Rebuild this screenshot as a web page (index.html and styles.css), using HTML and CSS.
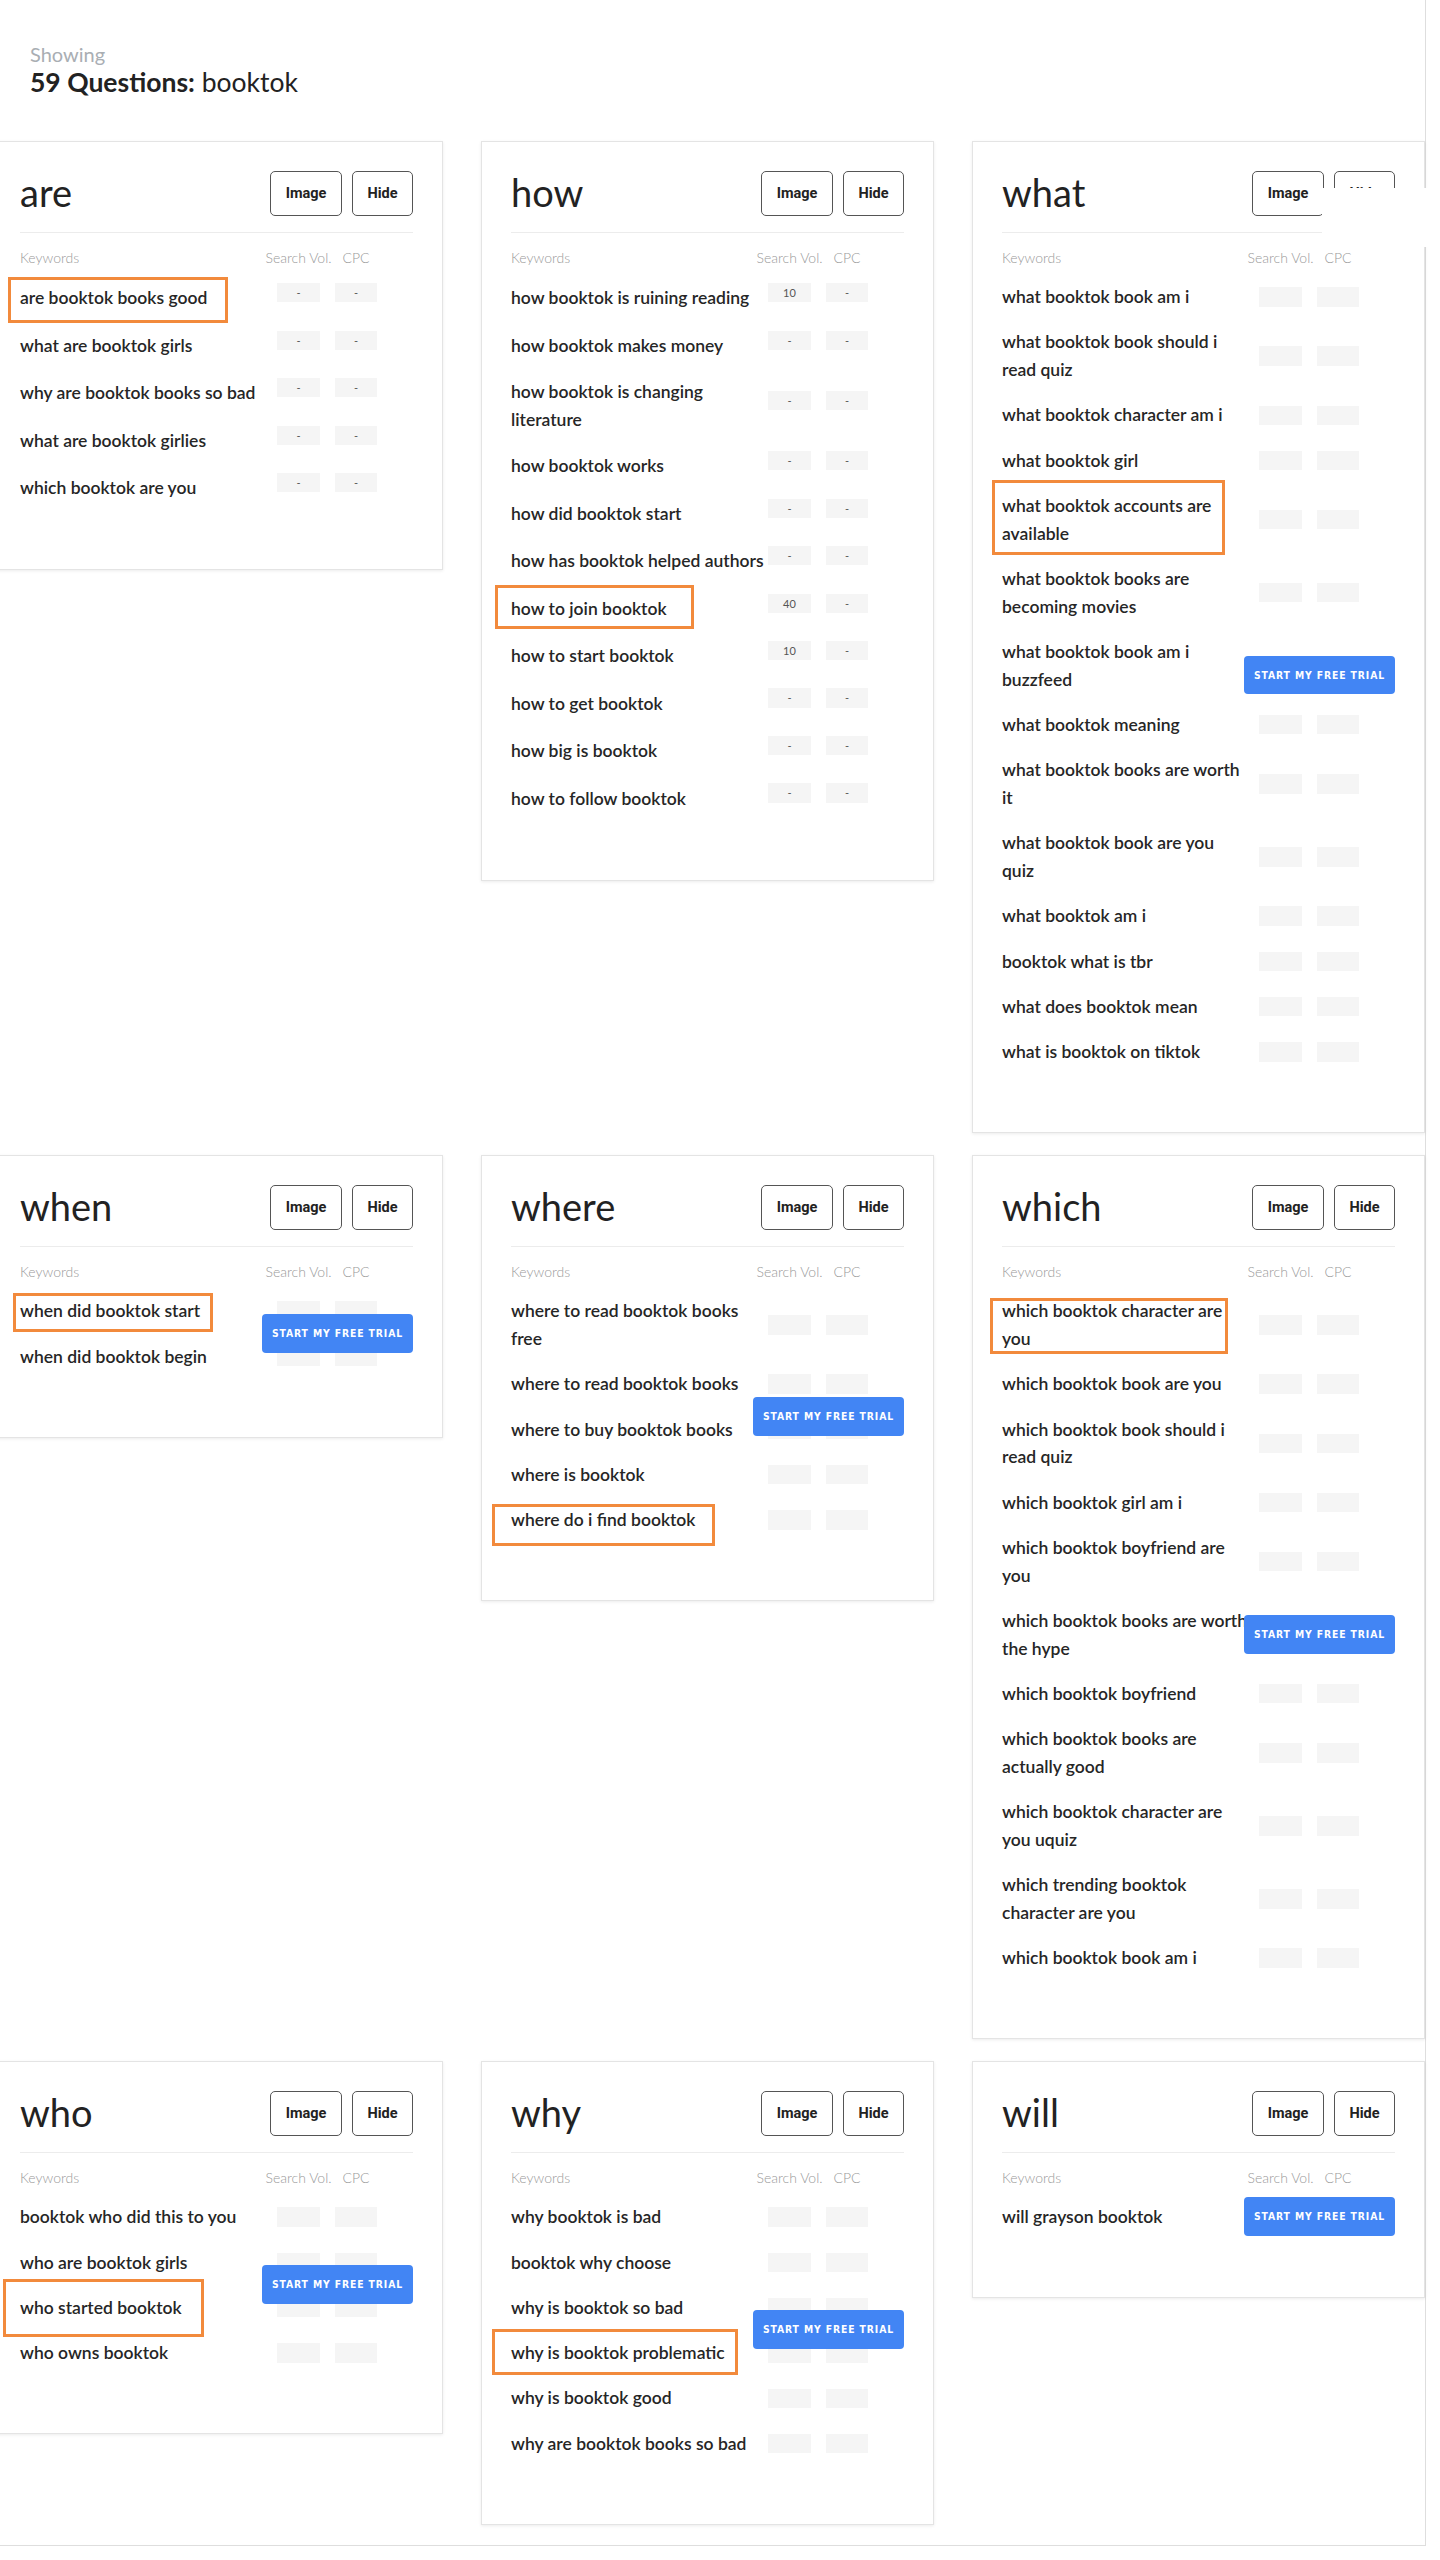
FILE: index.html
```html
<!DOCTYPE html>
<html lang="en">
<head>
<meta charset="utf-8">
<title>59 Questions: booktok</title>
<link rel="stylesheet" href="styles.css">
</head>
<body>
<div class="page">
  <div class="heading">
    <div class="showing">Showing</div>
    <div class="count"><strong>59 Questions:</strong> booktok</div>
  </div>

  <div class="grid">
    <!-- ARE -->
    <section class="card filled">
      <header class="card-head"><h2 class="card-title">are</h2><div class="actions"><button class="btn">Image</button><button class="btn">Hide</button></div></header>
      <div class="cols"><span class="c-kw">Keywords</span><span class="c-val">Search Vol.</span><span class="c-val c-cpc">CPC</span></div>
      <div class="row"><span class="kw">are booktok books good</span><span class="val">-</span><span class="val cpc">-</span><span class="hl hl-are"></span></div>
      <div class="row"><span class="kw">what are booktok girls</span><span class="val">-</span><span class="val cpc">-</span></div>
      <div class="row"><span class="kw">why are booktok books so bad</span><span class="val">-</span><span class="val cpc">-</span></div>
      <div class="row"><span class="kw">what are booktok girlies</span><span class="val">-</span><span class="val cpc">-</span></div>
      <div class="row"><span class="kw">which booktok are you</span><span class="val">-</span><span class="val cpc">-</span></div>
    </section>

    <!-- HOW -->
    <section class="card filled">
      <header class="card-head"><h2 class="card-title">how</h2><div class="actions"><button class="btn">Image</button><button class="btn">Hide</button></div></header>
      <div class="cols"><span class="c-kw">Keywords</span><span class="c-val">Search Vol.</span><span class="c-val c-cpc">CPC</span></div>
      <div class="row"><span class="kw">how booktok is ruining reading</span><span class="val">10</span><span class="val cpc">-</span></div>
      <div class="row"><span class="kw">how booktok makes money</span><span class="val">-</span><span class="val cpc">-</span></div>
      <div class="row"><span class="kw">how booktok is changing<br>literature</span><span class="val">-</span><span class="val cpc">-</span></div>
      <div class="row"><span class="kw">how booktok works</span><span class="val">-</span><span class="val cpc">-</span></div>
      <div class="row"><span class="kw">how did booktok start</span><span class="val">-</span><span class="val cpc">-</span></div>
      <div class="row"><span class="kw">how has booktok helped authors</span><span class="val">-</span><span class="val cpc">-</span></div>
      <div class="row"><span class="kw">how to join booktok</span><span class="val">40</span><span class="val cpc">-</span><span class="hl hl-how"></span></div>
      <div class="row"><span class="kw">how to start booktok</span><span class="val">10</span><span class="val cpc">-</span></div>
      <div class="row"><span class="kw">how to get booktok</span><span class="val">-</span><span class="val cpc">-</span></div>
      <div class="row"><span class="kw">how big is booktok</span><span class="val">-</span><span class="val cpc">-</span></div>
      <div class="row"><span class="kw">how to follow booktok</span><span class="val">-</span><span class="val cpc">-</span></div>
    </section>

    <!-- WHAT -->
    <section class="card">
      <header class="card-head"><h2 class="card-title">what</h2><div class="actions"><button class="btn">Image</button><button class="btn">Hide</button></div></header>
      <div class="cols"><span class="c-kw">Keywords</span><span class="c-val">Search Vol.</span><span class="c-val c-cpc">CPC</span></div>
      <div class="row"><span class="kw">what booktok book am i</span><span class="val"></span><span class="val cpc"></span></div>
      <div class="row"><span class="kw">what booktok book should i<br>read quiz</span><span class="val"></span><span class="val cpc"></span></div>
      <div class="row"><span class="kw">what booktok character am i</span><span class="val"></span><span class="val cpc"></span></div>
      <div class="row"><span class="kw">what booktok girl</span><span class="val"></span><span class="val cpc"></span></div>
      <div class="row"><span class="kw">what booktok accounts are<br>available</span><span class="val"></span><span class="val cpc"></span><span class="hl hl-what"></span></div>
      <div class="row"><span class="kw">what booktok books are<br>becoming movies</span><span class="val"></span><span class="val cpc"></span></div>
      <div class="row"><span class="kw">what booktok book am i<br>buzzfeed</span><span class="val"></span><span class="val cpc"></span></div>
      <div class="row"><span class="kw">what booktok meaning</span><span class="val"></span><span class="val cpc"></span></div>
      <div class="row"><span class="kw">what booktok books are worth<br>it</span><span class="val"></span><span class="val cpc"></span></div>
      <div class="row"><span class="kw">what booktok book are you<br>quiz</span><span class="val"></span><span class="val cpc"></span></div>
      <div class="row"><span class="kw">what booktok am i</span><span class="val"></span><span class="val cpc"></span></div>
      <div class="row"><span class="kw">booktok what is tbr</span><span class="val"></span><span class="val cpc"></span></div>
      <div class="row"><span class="kw">what does booktok mean</span><span class="val"></span><span class="val cpc"></span></div>
      <div class="row"><span class="kw">what is booktok on tiktok</span><span class="val"></span><span class="val cpc"></span></div>
      <button class="trial trial-what">START MY FREE TRIAL</button>
      <div class="mask"></div>
    </section>

    <!-- WHEN -->
    <section class="card">
      <header class="card-head"><h2 class="card-title">when</h2><div class="actions"><button class="btn">Image</button><button class="btn">Hide</button></div></header>
      <div class="cols"><span class="c-kw">Keywords</span><span class="c-val">Search Vol.</span><span class="c-val c-cpc">CPC</span></div>
      <div class="row"><span class="kw">when did booktok start</span><span class="val"></span><span class="val cpc"></span><span class="hl hl-when"></span></div>
      <div class="row"><span class="kw">when did booktok begin</span><span class="val"></span><span class="val cpc"></span></div>
      <button class="trial trial-when">START MY FREE TRIAL</button>
    </section>

    <!-- WHERE -->
    <section class="card">
      <header class="card-head"><h2 class="card-title">where</h2><div class="actions"><button class="btn">Image</button><button class="btn">Hide</button></div></header>
      <div class="cols"><span class="c-kw">Keywords</span><span class="c-val">Search Vol.</span><span class="c-val c-cpc">CPC</span></div>
      <div class="row"><span class="kw">where to read booktok books<br>free</span><span class="val"></span><span class="val cpc"></span></div>
      <div class="row"><span class="kw">where to read booktok books</span><span class="val"></span><span class="val cpc"></span></div>
      <div class="row"><span class="kw">where to buy booktok books</span><span class="val"></span><span class="val cpc"></span></div>
      <div class="row"><span class="kw">where is booktok</span><span class="val"></span><span class="val cpc"></span></div>
      <div class="row"><span class="kw">where do i find booktok</span><span class="val"></span><span class="val cpc"></span><span class="hl hl-where"></span></div>
      <button class="trial trial-where">START MY FREE TRIAL</button>
    </section>

    <!-- WHICH -->
    <section class="card">
      <header class="card-head"><h2 class="card-title">which</h2><div class="actions"><button class="btn">Image</button><button class="btn">Hide</button></div></header>
      <div class="cols"><span class="c-kw">Keywords</span><span class="c-val">Search Vol.</span><span class="c-val c-cpc">CPC</span></div>
      <div class="row"><span class="kw">which booktok character are<br>you</span><span class="val"></span><span class="val cpc"></span><span class="hl hl-which"></span></div>
      <div class="row"><span class="kw">which booktok book are you</span><span class="val"></span><span class="val cpc"></span></div>
      <div class="row"><span class="kw">which booktok book should i<br>read quiz</span><span class="val"></span><span class="val cpc"></span></div>
      <div class="row"><span class="kw">which booktok girl am i</span><span class="val"></span><span class="val cpc"></span></div>
      <div class="row"><span class="kw">which booktok boyfriend are<br>you</span><span class="val"></span><span class="val cpc"></span></div>
      <div class="row"><span class="kw">which booktok books are worth<br>the hype</span><span class="val"></span><span class="val cpc"></span></div>
      <div class="row"><span class="kw">which booktok boyfriend</span><span class="val"></span><span class="val cpc"></span></div>
      <div class="row"><span class="kw">which booktok books are<br>actually good</span><span class="val"></span><span class="val cpc"></span></div>
      <div class="row"><span class="kw">which booktok character are<br>you uquiz</span><span class="val"></span><span class="val cpc"></span></div>
      <div class="row"><span class="kw">which trending booktok<br>character are you</span><span class="val"></span><span class="val cpc"></span></div>
      <div class="row"><span class="kw">which booktok book am i</span><span class="val"></span><span class="val cpc"></span></div>
      <button class="trial trial-which">START MY FREE TRIAL</button>
    </section>

    <!-- WHO -->
    <section class="card">
      <header class="card-head"><h2 class="card-title">who</h2><div class="actions"><button class="btn">Image</button><button class="btn">Hide</button></div></header>
      <div class="cols"><span class="c-kw">Keywords</span><span class="c-val">Search Vol.</span><span class="c-val c-cpc">CPC</span></div>
      <div class="row"><span class="kw">booktok who did this to you</span><span class="val"></span><span class="val cpc"></span></div>
      <div class="row"><span class="kw">who are booktok girls</span><span class="val"></span><span class="val cpc"></span></div>
      <div class="row"><span class="kw">who started booktok</span><span class="val"></span><span class="val cpc"></span><span class="hl hl-who"></span></div>
      <div class="row"><span class="kw">who owns booktok</span><span class="val"></span><span class="val cpc"></span></div>
      <button class="trial trial-who">START MY FREE TRIAL</button>
    </section>

    <!-- WHY -->
    <section class="card">
      <header class="card-head"><h2 class="card-title">why</h2><div class="actions"><button class="btn">Image</button><button class="btn">Hide</button></div></header>
      <div class="cols"><span class="c-kw">Keywords</span><span class="c-val">Search Vol.</span><span class="c-val c-cpc">CPC</span></div>
      <div class="row"><span class="kw">why booktok is bad</span><span class="val"></span><span class="val cpc"></span></div>
      <div class="row"><span class="kw">booktok why choose</span><span class="val"></span><span class="val cpc"></span></div>
      <div class="row"><span class="kw">why is booktok so bad</span><span class="val"></span><span class="val cpc"></span></div>
      <div class="row"><span class="kw">why is booktok problematic</span><span class="val"></span><span class="val cpc"></span><span class="hl hl-why"></span></div>
      <div class="row"><span class="kw">why is booktok good</span><span class="val"></span><span class="val cpc"></span></div>
      <div class="row"><span class="kw">why are booktok books so bad</span><span class="val"></span><span class="val cpc"></span></div>
      <button class="trial trial-why">START MY FREE TRIAL</button>
    </section>

    <!-- WILL -->
    <section class="card">
      <header class="card-head"><h2 class="card-title">will</h2><div class="actions"><button class="btn">Image</button><button class="btn">Hide</button></div></header>
      <div class="cols"><span class="c-kw">Keywords</span><span class="c-val">Search Vol.</span><span class="c-val c-cpc">CPC</span></div>
      <div class="row"><span class="kw">will grayson booktok</span><span class="val"></span><span class="val cpc"></span></div>
      <button class="trial trial-will">START MY FREE TRIAL</button>
    </section>
  </div>
</div>
</body>
</html>
```

FILE: styles.css
```css
* { box-sizing: border-box; }

body {
  margin: 0;
  background: #fff;
  font-family: Lato, "Noto Sans", sans-serif;
  color: #222;
}

.page {
  width: 1436px;
  margin-left: -10px;
  border-right: 1px solid #dedede;
  border-bottom: 1px solid #dedede;
  padding-bottom: 20px;
}

.heading {
  padding: 42px 0 0 40px;
  margin-bottom: 43px;
}

.showing {
  font-size: 20px;
  line-height: 24px;
  color: #a9aeb3;
}

.count {
  font-size: 26.5px;
  line-height: 32px;
  color: #222;
}

.count strong { font-weight: 700; }

.grid {
  display: grid;
  grid-template-columns: repeat(3, 453px);
  column-gap: 38px;
  row-gap: 22px;
  align-items: start;
}

.card {
  position: relative;
  background: #fff;
  border: 1px solid #e4e4e4;
  box-shadow: 0 1px 3px rgba(0, 0, 0, 0.08);
  padding: 29px 29px 57.5px;
}

.card-head {
  display: flex;
  justify-content: space-between;
  align-items: flex-start;
  height: 62px;
  padding-bottom: 16px;
  border-bottom: 1px solid #ececec;
}

.card-title {
  margin: 0;
  font-size: 38px;
  font-weight: 400;
  line-height: 42px;
  color: #222;
}

.actions {
  display: flex;
  gap: 10px;
}

.btn {
  height: 45px;
  padding: 0 14.5px;
  border: 1px solid #555;
  border-radius: 5px;
  background: #fff;
  font-family: Roboto, "Liberation Sans", sans-serif;
  font-weight: 700;
  font-size: 14.5px;
  color: #222;
}

.cols {
  display: flex;
  padding: 15px 0 6.3px;
  font-size: 14px;
  line-height: 20px;
  font-weight: 300;
  color: #999;
}

.c-kw { width: 257px; flex: none; }

.c-val {
  width: 43px;
  flex: none;
  display: flex;
  justify-content: center;
  white-space: nowrap;
}

.c-cpc { width: 42px; margin-left: 15px; }

.row {
  position: relative;
  display: flex;
  align-items: center;
  padding: 8.8px 0;
}

.kw {
  width: 257px;
  flex: none;
  font-size: 17.5px;
  line-height: 27.7px;
  font-weight: 600;
  white-space: nowrap;
  color: #262626;
}

.val {
  width: 43px;
  height: 19.3px;
  flex: none;
  background: #f5f5f5;
  font-size: 11px;
  line-height: 19.3px;
  text-align: center;
  color: #555;
}

.val.cpc { width: 42px; margin-left: 15px; }

.filled .val { margin-bottom: 10.6px; }

/* orange annotation frames */
.hl {
  position: absolute;
  border: 3px solid #f28a3c;
  pointer-events: none;
}
.hl-are   { left: -12px; top: 2.5px;  width: 220px; height: 46px; }
.hl-how   { left: -16px; top: 0;      width: 199px; height: 44px; }
.hl-what  { left: -10px; top: -3px;   width: 233px; height: 75px; }
.hl-when  { left: -7px;  top: 4.7px;  width: 200px; height: 39px; }
.hl-where { left: -19px; top: 6.8px;  width: 223px; height: 42px; }
.hl-which { left: -12px; top: 10px;   width: 238px; height: 56px; }
.hl-who   { left: -17px; top: -6px;   width: 201px; height: 58px; }
.hl-why   { left: -19px; top: -1px;   width: 246px; height: 46px; }

/* upsell overlays */
.trial {
  position: absolute;
  right: 29px;
  width: 151px;
  height: 38.5px;
  border: 0;
  border-radius: 4px;
  background: #4285f4;
  color: #fff;
  font-family: "DejaVu Sans Condensed", "DejaVu Sans", sans-serif;
  font-weight: 700;
  font-size: 10.3px;
  letter-spacing: 0.9px;
  padding: 0;
}
.trial-what  { top: 513.7px; }
.trial-when  { top: 158px; }
.trial-where { top: 241px; }
.trial-which { top: 459px; }
.trial-who   { top: 203px; }
.trial-why   { top: 248px; }
.trial-will  { top: 135px; }

.mask {
  position: absolute;
  left: 349px;
  top: 46px;
  width: 118px;
  height: 59px;
  background: #fff;
}
```
